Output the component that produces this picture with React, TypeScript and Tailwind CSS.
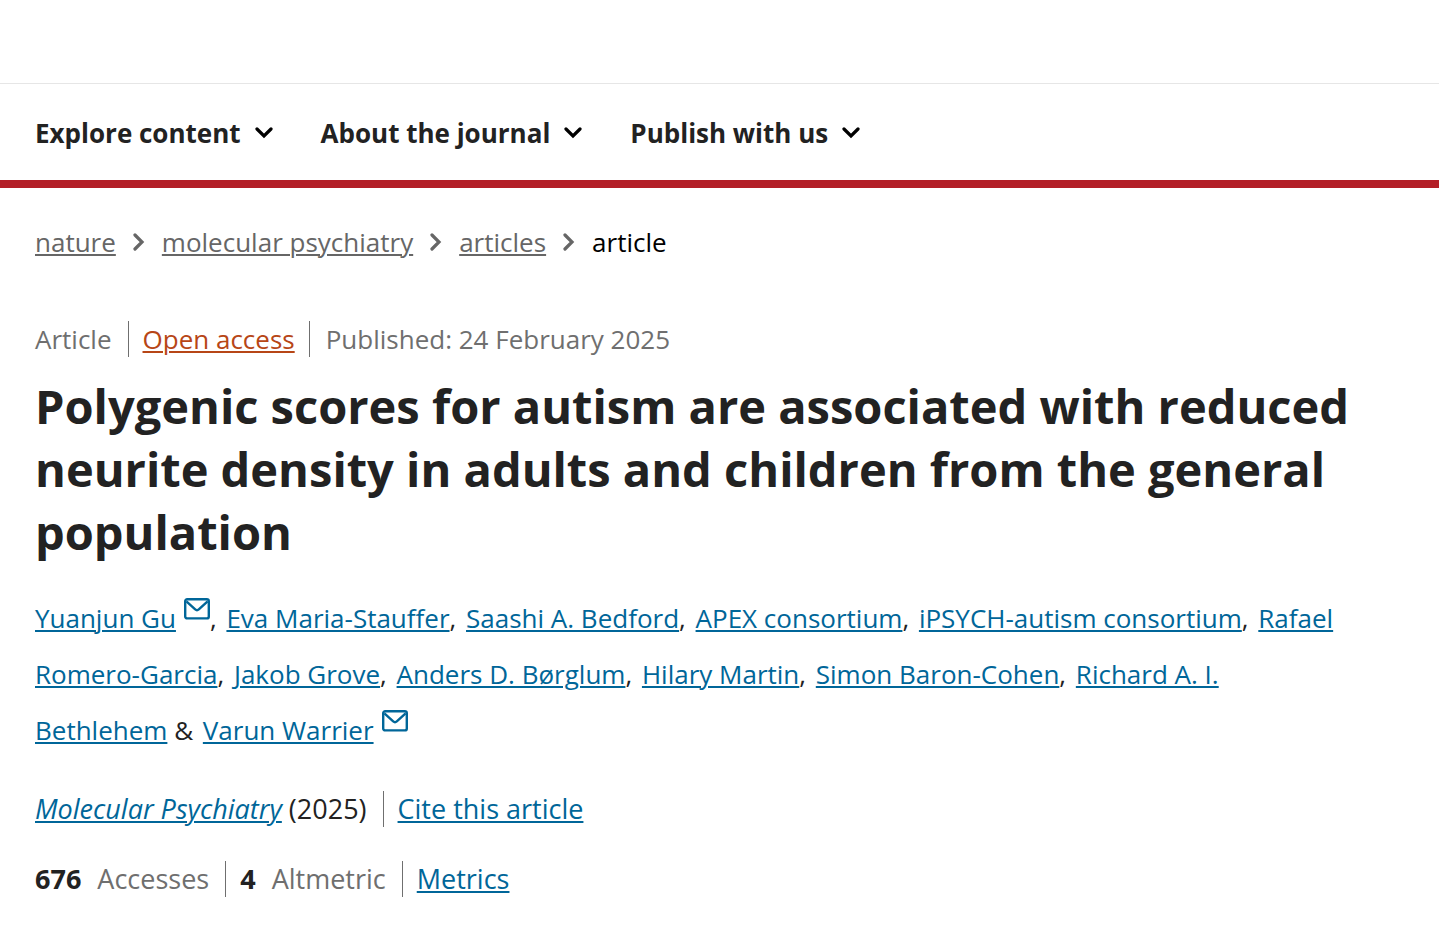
import React, { Fragment } from 'react';

const menus = ['Explore content', 'About the journal', 'Publish with us'];

const crumbs = ['nature', 'molecular psychiatry', 'articles'];

const authors = [
  { name: 'Yuanjun Gu', mail: true },
  { name: 'Eva Maria-Stauffer' },
  { name: 'Saashi A. Bedford' },
  { name: 'APEX consortium' },
  { name: 'iPSYCH-autism consortium' },
  { name: 'Rafael Romero-Garcia' },
  { name: 'Jakob Grove' },
  { name: 'Anders D. Børglum' },
  { name: 'Hilary Martin' },
  { name: 'Simon Baron-Cohen' },
  { name: 'Richard A. I. Bethlehem' },
  { name: 'Varun Warrier', mail: true },
];

const metrics = [
  { value: '676', label: 'Accesses' },
  { value: '4', label: 'Altmetric' },
];

const ChevronDown = () => (
  <svg viewBox="0 0 18 12" className="w-[18px] h-3 text-black" fill="none" stroke="currentColor" strokeWidth="3.2" strokeLinecap="round" aria-hidden="true">
    <path d="M2 2l7 7 7-7" />
  </svg>
);

const ChevronRight = () => (
  <svg viewBox="0 0 12 18" className="w-3 h-[18px] shrink-0" fill="none" stroke="currentColor" strokeWidth="3.2" strokeLinecap="round" aria-hidden="true">
    <path d="M2 2l7 7-7 7" />
  </svg>
);

const MailIcon = () => (
  <svg viewBox="0 0 26 22" className="inline-block w-[26px] h-[22px] ml-2 mb-2 align-baseline text-[#006699]" fill="none" stroke="currentColor" strokeWidth="2.4" strokeLinejoin="round" aria-hidden="true">
    <rect x="1.2" y="1.2" width="23.6" height="19.2" rx="2" />
    <path d="M2.4 3.4l8.8 8q1.8 1.5 3.6 0l8.8-8" />
  </svg>
);

const linkClass = 'text-[#006699] underline underline-offset-2 decoration-2';

const App = () => {
  return (
    <div className="min-h-screen bg-white font-['Open_Sans','Noto_Sans',sans-serif] text-[26px] leading-9 text-[#222222]">
      <header className="border-b-8 border-[#b31f27]">
        <div className="h-21 border-b border-[#e6e6e6]" />
        <nav className="flex items-center gap-12 px-[35px] pt-0.5 h-24">
          {menus.map((menu) => (
            <button key={menu} className="flex items-center gap-[14px] font-bold">
              {menu} <ChevronDown />
            </button>
          ))}
        </nav>
      </header>

      <main className="px-[35px]">
        <nav aria-label="Breadcrumb" className="mt-9">
          <ol className="flex items-center gap-[17px] text-[#666666]">
            {crumbs.map((crumb) => (
              <Fragment key={crumb}>
                <li><a href="#" className="underline underline-offset-2 decoration-2">{crumb}</a></li>
                <li><ChevronRight /></li>
              </Fragment>
            ))}
            <li className="text-black">article</li>
          </ol>
        </nav>

        <ul className="flex mt-[61px] text-[#6f6f6f]">
          <li className="pr-4 border-r border-[#6f6f6f]">Article</li>
          <li className="px-[14px] border-r border-[#6f6f6f]">
            <a href="#" className="text-[#b74616] underline underline-offset-2 decoration-2">Open access</a>
          </li>
          <li className="pl-4">Published: <time dateTime="2025-02-24">24 February 2025</time></li>
        </ul>

        <h1 className="mt-[18px] text-[47px] leading-[63px] font-bold">
          Polygenic scores for autism are associated with reduced neurite density in adults and children from the general population
        </h1>

        {/* Authors */}
        <p className="mt-[26px] pr-14 leading-[56px]">
          {authors.map((author, i) => (
            <Fragment key={author.name}>
              {i > 0 && (i === authors.length - 1 ? ' & ' : ', ')}
              <a href="#" className={i > 0 ? `${linkClass} ml-[3px]` : linkClass}>{author.name}</a>
              {author.mail && <MailIcon />}
            </Fragment>
          ))}
        </p>

        <div className="flex mt-[33px] text-[27px]">
          <p className="pr-4 border-r border-[#6f6f6f]">
            <a href="#" className={linkClass}><i>Molecular Psychiatry</i></a> (2025)
          </p>
          <a href="#" className={`${linkClass} ml-[14px]`}>Cite this article</a>
        </div>

        {/* Metrics */}
        <ul className="flex gap-[14px] mt-[34px] text-[27px]">
          {metrics.map((metric) => (
            <li key={metric.label} className="flex gap-4 pr-4 border-r border-[#6f6f6f]">
              <b>{metric.value}</b>
              <span className="text-[#6f6f6f]">{metric.label}</span>
            </li>
          ))}
          <li><a href="#" className={linkClass}>Metrics</a></li>
        </ul>
      </main>
    </div>
  );
};

export default App;
